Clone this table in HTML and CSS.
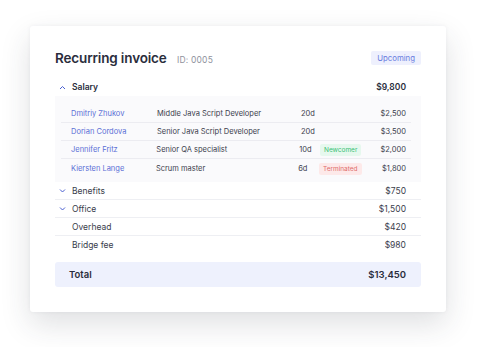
FILE: index.html
```html
<!DOCTYPE html>
<html>
<head>
<meta charset="utf-8">
<link rel="stylesheet" href="styles.css">
</head>
<body>
<div class="card">
  <div class="header">
    <div class="title">Recurring invoice <span class="id">ID: 0005</span></div>
    <span class="status">Upcoming</span>
  </div>

  <div class="row group open">
    <span class="chev"><svg width="7" height="5" viewBox="0 0 7 5"><path d="M1 4L3.5 1.5L6 4" fill="none" stroke="#4a5fd0" stroke-width="1"/></svg></span>
    <span class="label strong">Salary</span>
    <span class="amount strong">$9,800</span>
  </div>

  <div class="sub">
    <div class="subrow">
      <span class="name">Dmitriy Zhukov</span>
      <span class="role">Middle Java Script Developer</span>
      <span class="days">20d</span>
      <span class="tag"></span>
      <span class="amount">$2,500</span>
    </div>
    <div class="subrow">
      <span class="name">Dorian Cordova</span>
      <span class="role">Senior Java Script Developer</span>
      <span class="days">20d</span>
      <span class="tag"></span>
      <span class="amount">$3,500</span>
    </div>
    <div class="subrow">
      <span class="name">Jennifer Fritz</span>
      <span class="role">Senior QA specialist</span>
      <span class="days">10d</span>
      <span class="tag"><span class="badge new">Newcomer</span></span>
      <span class="amount">$2,000</span>
    </div>
    <div class="subrow">
      <span class="name">Kiersten Lange</span>
      <span class="role">Scrum master</span>
      <span class="days">6d</span>
      <span class="tag"><span class="badge term">Terminated</span></span>
      <span class="amount">$1,800</span>
    </div>
  </div>

  <div class="row group">
    <span class="chev"><svg width="7" height="5" viewBox="0 0 7 5"><path d="M1 1.5L3.5 4L6 1.5" fill="none" stroke="#4a5fd0" stroke-width="1"/></svg></span>
    <span class="label">Benefits</span>
    <span class="amount">$750</span>
  </div>
  <div class="row group">
    <span class="chev"><svg width="7" height="5" viewBox="0 0 7 5"><path d="M1 1.5L3.5 4L6 1.5" fill="none" stroke="#4a5fd0" stroke-width="1"/></svg></span>
    <span class="label">Office</span>
    <span class="amount">$1,500</span>
  </div>
  <div class="row">
    <span class="chev"></span>
    <span class="label">Overhead</span>
    <span class="amount">$420</span>
  </div>
  <div class="row last">
    <span class="chev"></span>
    <span class="label">Bridge fee</span>
    <span class="amount">$980</span>
  </div>

  <div class="total">
    <span>Total</span>
    <span>$13,450</span>
  </div>
</div>
</body>
</html>
```

FILE: styles.css
```css
* { box-sizing: border-box; }
html, body { margin: 0; padding: 0; background: #ffffff; }
body {
  font-family: Inter, "Noto Sans", sans-serif;
  color: #33364a;
  padding: 26px 31px 35px 30px;
}
.card {
  width: 416px;
  height: 286px;
  background: #fff;
  border-radius: 3px;
  box-shadow: 0 12px 30px rgba(40, 44, 60, 0.15), 0 0 4px rgba(40,44,60,0.05);
  padding: 25px 25px 25px 25px;
  display: flex;
  flex-direction: column;
}
.header {
  display: flex;
  align-items: center;
  justify-content: space-between;
  height: 14px;
  margin-bottom: 13px;
}
.title {
  font-size: 13.5px;
  font-weight: 600;
  color: #2a2d3c;
  letter-spacing: -0.15px;
  white-space: nowrap;
}
.id {
  font-size: 8.5px;
  font-weight: 400;
  color: #8f929d;
  margin-left: 7px;
  letter-spacing: 0.2px;
}
.status {
  font-size: 7.8px;
  color: #6a7de0;
  background: #eef0fd;
  border-radius: 2px;
  padding: 3px 6px;
  line-height: 8px;
}
.row {
  display: flex;
  align-items: center;
  height: 18px;
  border-bottom: 1px solid #eeeff3;
  font-size: 8.5px;
  color: #3a3d4c;
}
.row.open, .row.last { border-bottom: none; }
.chev {
  width: 17px;
  padding-left: 4px;
  display: flex;
  align-items: center;
}
.label { flex: 1; }
.strong { font-weight: 600; color: #2a2d3c; font-size: 8.5px; }
.row .amount { width: 60px; text-align: right; padding-right: 15px; }
.sub {
  background: #fafafc;
  padding: 9px 0 5px 0;
}
.subrow {
  display: flex;
  align-items: center;
  height: 18px;
  margin: 0 10px 0 6px;
  font-size: 7.5px;
  color: #3a3d4c;
  border-bottom: 1px solid #ececf1;
}
.subrow:last-child { border-bottom: none; }
.name { width: 96px; padding-left: 10px; color: #5a6fd6; }
.role { width: 144px; }
.days { width: 21px; }
.tag { flex: 1; }
.subrow .amount { width: 50px; text-align: right; padding-right: 5px; }
.badge {
  font-size: 6.5px;
  padding: 2px 4px;
  border-radius: 2px;
  line-height: 8px;
}
.badge.new { background: #e6f8ee; color: #39be74; }
.badge.term { background: #fde9e9; color: #e06c6a; }
.total {
  margin-top: 8px;
  height: 25px;
  background: #eef1fd;
  border-radius: 3px;
  display: flex;
  align-items: center;
  justify-content: space-between;
  padding: 0 15px 0 14px;
  font-size: 9.5px;
  font-weight: 600;
  color: #2a2d3c;
}
```
